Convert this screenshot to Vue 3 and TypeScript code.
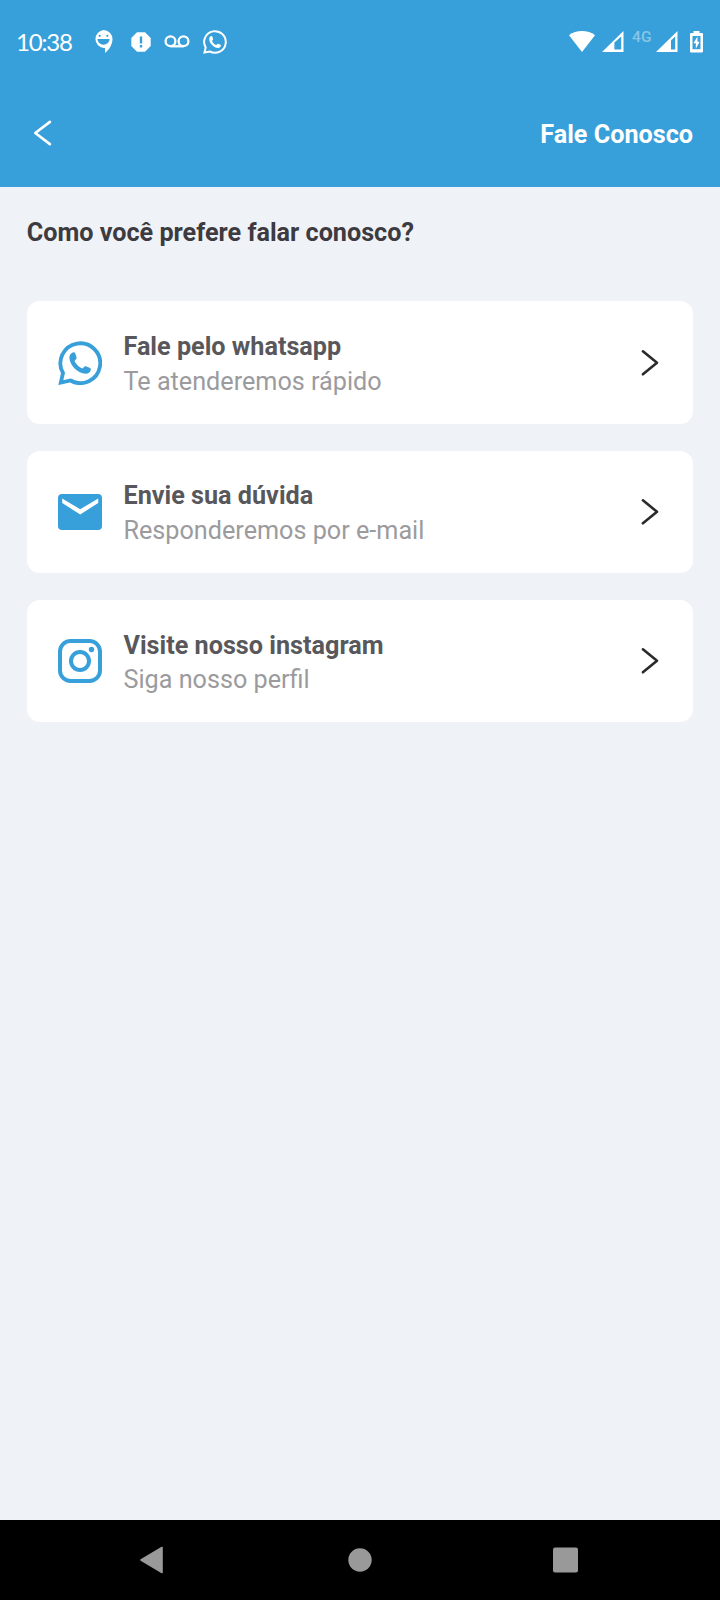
<script setup lang="ts">
interface Channel {
  id: 'whatsapp' | 'mail' | 'instagram'
  title: string
  detail: string
}

const channels: Channel[] = [
  { id: 'whatsapp', title: 'Fale pelo whatsapp', detail: 'Te atenderemos rápido' },
  { id: 'mail', title: 'Envie sua dúvida', detail: 'Responderemos por e-mail' },
  { id: 'instagram', title: 'Visite nosso instagram', detail: 'Siga nosso perfil' },
]

const handset =
  'M8.600 6.100C7.300 6.300 6.200 7.400 6.200 8.900C6.300 13.400 10.800 17.700 15.100 17.900C16.600 17.900 17.800 16.800 17.900 15.500C17.900 15.100 17.800 14.900 17.500 14.700L15.200 13.800C14.900 13.700 14.600 13.700 14.400 14L13.300 15C11.400 14.300 9.800 12.600 9 10.900L10 9.700C10.200 9.500 10.200 9.200 10.100 8.900L9.300 6.600C9.200 6.300 9 6.100 8.600 6.100Z'
const bubble = 'M1.5 22.5L2.7 17.5A10.8 10.8 0 1 1 6.9 21.5Z'
</script>

<template>
  <div class="screen">
    <header class="top">
      <div class="status">
        <span class="time">10:38</span>
        <div class="notifications">
          <svg width="20" height="25" viewBox="0 0 20 25">
            <path fill="#fff" d="M9.500 1A9 9 0 0 1 18.500 10C18.500 15.500 15 21 11 24V18.900H9.500A9 9 0 0 1 9.500 1Z" />
            <path fill="#379fd9" d="M3.400 9.900H15.600A6.100 5.800 0 0 1 3.400 9.900Z" />
            <circle cx="5.700" cy="6.800" r="1.100" fill="#379fd9" />
            <circle cx="13.300" cy="6.800" r="1.100" fill="#379fd9" />
          </svg>
          <svg width="20" height="20" viewBox="0 0 20 20">
            <path fill="#fff" d="M6 .3h8L19.700 6v8L14 19.700H6L.3 14V6Z" />
            <path fill="#379fd9" d="M8.800 4.500h2.400v7H8.800zM8.800 13.100h2.400v2.400H8.800z" />
          </svg>
          <svg width="26" height="13" viewBox="0 0 26 13">
            <g fill="none" stroke="#fff" stroke-width="2.300">
              <circle cx="6.500" cy="6.300" r="4.900" />
              <circle cx="19.500" cy="6.300" r="4.900" />
              <path d="M6.500 11.300H19.500" />
            </g>
          </svg>
          <svg width="24" height="24" viewBox="0 0 24 24">
            <path :d="bubble" fill="none" stroke="#fff" stroke-width="2" />
            <path :d="handset" fill="#fff" />
          </svg>
        </div>
        <div class="system">
          <svg class="wifi" width="26" height="21" viewBox="0 0 26 21">
            <path fill="#fff" d="M0 4.300C7-1.300 19-1.300 26 4.300L13 21Z" />
          </svg>
          <svg class="signal" width="22" height="21" viewBox="0 0 22 21">
            <path fill="#fff" fill-rule="evenodd" d="M21.500 0V21H0ZM12.400 11.600V18.500H19.200V5.500Z" />
          </svg>
          <span class="network">4G</span>
          <svg class="signal" width="22" height="21" viewBox="0 0 22 21">
            <path fill="#fff" fill-rule="evenodd" d="M21.500 0V21H0ZM15 9.500V18.500H19.200V5.500Z" />
          </svg>
          <svg class="battery" width="13" height="22" viewBox="0 0 13 22">
            <path fill="#fff" d="M3.500 0h6v2H12a1 1 0 0 1 1 1V20.500a1 1 0 0 1-1 1H1a1 1 0 0 1-1-1V3a1 1 0 0 1 1-1H3.500Z" />
            <path fill="#379fd9" d="M2.500 5H10.500V18.200H2.500Z" />
            <path fill="#fff" d="M7.500 5.500L3.400 12.300H5.800V17.800L9.700 10.700H7.500Z" />
          </svg>
        </div>
      </div>
      <div class="bar">
        <svg class="back" width="20" height="28" viewBox="0 0 20 28">
          <path d="M16.900 2.900L2.300 14L16.900 25.100" fill="none" stroke="#fff" stroke-width="2.700" stroke-linecap="round" stroke-linejoin="round" />
        </svg>
        <h1>Fale Conosco</h1>
      </div>
    </header>

    <main>
      <h2>Como você prefere falar conosco?</h2>
      <div class="cards">
        <div v-for="channel in channels" :key="channel.id" class="card">
          <svg v-if="channel.id === 'whatsapp'" class="icon" viewBox="0 0 44 44">
            <path d="M2.800 41.600L5 32A19.900 19.900 0 1 1 12.500 39.500Z" fill="none" stroke="#379fd9" stroke-width="3.800" />
            <path :d="handset" fill="#379fd9" transform="scale(1.8333)" />
          </svg>
          <svg v-else-if="channel.id === 'mail'" class="icon" viewBox="0 0 44 44">
            <rect y="4" width="44" height="36" rx="4" fill="#379fd9" />
            <path d="M4.200 8.600L22.200 19.200L40.200 8.600V13.100L22.200 24.400L4.200 13.100Z" fill="#fff" />
          </svg>
          <svg v-else class="icon" viewBox="0 0 44 44">
            <rect x="2" y="2" width="40" height="40" rx="10.500" fill="none" stroke="#379fd9" stroke-width="4" />
            <circle cx="22" cy="22" r="9" fill="none" stroke="#379fd9" stroke-width="4" />
            <circle cx="33.500" cy="10.500" r="2.700" fill="#379fd9" />
          </svg>
          <div class="copy">
            <span class="title">{{ channel.title }}</span>
            <span class="detail">{{ channel.detail }}</span>
          </div>
          <svg class="chevron" width="20" height="28" viewBox="0 0 20 28">
            <path d="M2.900 2.300L17 13.800L2.900 25.300" fill="none" stroke="#2a2a2c" stroke-width="2.600" stroke-linecap="round" stroke-linejoin="round" />
          </svg>
        </div>
      </div>
    </main>

    <nav>
      <svg width="24" height="28" viewBox="0 0 24 28">
        <path d="M22 1.500V26.500L1 14Z" fill="#999" stroke="#999" stroke-width="1.600" stroke-linejoin="round" />
      </svg>
      <svg width="24" height="24" viewBox="0 0 24 24"><circle cx="12" cy="12" r="11.700" fill="#999" /></svg>
      <svg width="26" height="26" viewBox="0 0 26 26"><rect y=".5" width="25" height="25" rx="2" fill="#999" /></svg>
    </nav>
  </div>
</template>

<style>
body {
  margin: 0;
}
</style>

<style scoped>
.screen {
  width: 720px;
  height: 1600px;
  display: flex;
  flex-direction: column;
  background: #eff2f7;
  font-family: Roboto, "Liberation Sans", sans-serif;
  overflow: hidden;
}
svg {
  display: block;
  flex: none;
}
.top {
  height: 186.600px;
  flex: none;
  background: #379fd9;
  color: #fff;
}
.status {
  height: 83px;
  display: flex;
  align-items: center;
  padding: 0 17px 0 16px;
  box-sizing: border-box;
}
.time {
  width: 78px;
  font-family: Lato, sans-serif;
  font-size: 24px;
  letter-spacing: -1.200px;
}
.notifications {
  display: flex;
  align-items: center;
  gap: 14px;
}
.notifications svg:nth-child(2) {
  margin-left: 2.500px;
}
.notifications svg:nth-child(3) {
  margin-left: -0.500px;
}
.notifications svg:nth-child(4) {
  margin-left: -1.500px;
}
.system {
  display: flex;
  align-items: center;
  margin-left: auto;
}
.signal {
  margin-left: 7px;
}
.network {
  width: 24px;
  margin: -9px 0 0 8px;
  font-size: 15.500px;
  font-weight: 500;
  line-height: 16px;
  letter-spacing: 0.300px;
  opacity: 0.4;
}
.network + .signal {
  margin-left: 0;
}
.battery {
  margin-left: 12px;
}
.bar {
  height: 103px;
  display: flex;
  align-items: center;
  justify-content: space-between;
  padding: 0 27px 0 33px;
}
.back {
  margin-bottom: 2.500px;
}
h1,
h2 {
  margin: 0;
  font-size: 25.200px;
  font-weight: 700;
  line-height: 30px;
}
h1 {
  margin-top: 1px;
}
main {
  flex: 1;
  padding: 31px 26.700px 0;
}
h2 {
  color: #3d3a40;
}
.cards {
  display: flex;
  flex-direction: column;
  gap: 26.700px;
  margin-top: 53.700px;
}
.card {
  height: 122.600px;
  box-sizing: border-box;
  display: flex;
  align-items: center;
  padding: 0 33.300px 0 31.300px;
  border-radius: 13px;
  background: #fff;
}
.icon {
  width: 44px;
  height: 44px;
}
.copy {
  flex: 1;
  display: flex;
  flex-direction: column;
  padding-top: 4px;
  margin-left: 21.500px;
  font-size: 25.200px;
  line-height: 34.600px;
  white-space: nowrap;
}
.title {
  color: #58585c;
  font-weight: 700;
}
.detail {
  color: #9b9b9e;
}
nav {
  height: 80px;
  flex: none;
  display: flex;
  align-items: center;
  justify-content: space-between;
  box-sizing: border-box;
  padding: 0 141px 0 139.500px;
  background: #000;
}
nav svg:nth-child(2) {
  margin-left: 3.500px;
}
</style>
